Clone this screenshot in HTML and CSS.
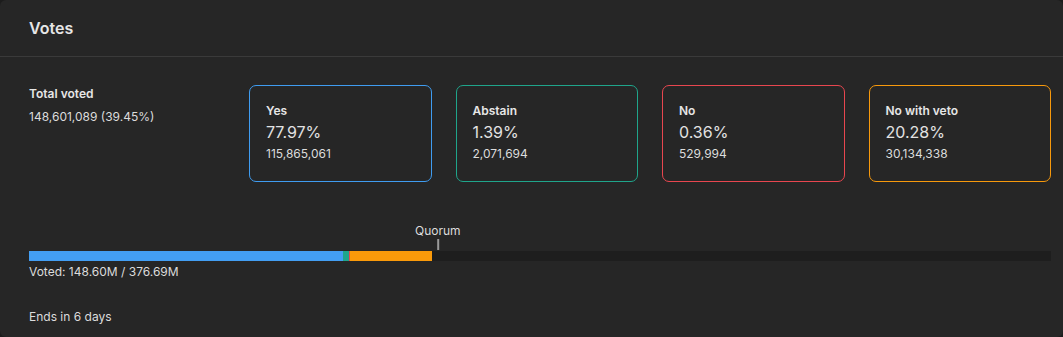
FILE: index.html
```html
<!DOCTYPE html>
<html lang="en">
<head>
  <meta charset="UTF-8" />
  <meta name="viewport" content="width=device-width, initial-scale=1.0" />
  <title>Votes</title>
  <link rel="stylesheet" href="styles.css">
</head>
<body>

  <div class="panel">
    <div class="panel-header">
      <h2>Votes</h2>
    </div>

    <div class="panel-body">
      <div class="summary">
        <div class="total">
          <div class="label">Total voted</div>
          <div class="value">148,601,089 (39.45%)</div>
        </div>

        <div class="options">
          <div class="option yes">
            <div class="label">Yes</div>
            <div class="percent">77.97%</div>
            <div class="value">115,865,061</div>
          </div>
          <div class="option abstain">
            <div class="label">Abstain</div>
            <div class="percent">1.39%</div>
            <div class="value">2,071,694</div>
          </div>
          <div class="option no">
            <div class="label">No</div>
            <div class="percent">0.36%</div>
            <div class="value">529,994</div>
          </div>
          <div class="option veto">
            <div class="label">No with veto</div>
            <div class="percent">20.28%</div>
            <div class="value">30,134,338</div>
          </div>
        </div>
      </div>

      <div class="progress">
        <div class="quorum" style="left: 40%">
          <span>Quorum</span>
          <div class="tick"></div>
        </div>
        <div class="bar">
          <div class="seg yes" style="width: 30.76%"></div>
          <div class="seg abstain" style="width: 0.55%"></div>
          <div class="seg no" style="width: 0.14%"></div>
          <div class="seg veto" style="width: 8%"></div>
        </div>
        <div class="voted">Voted: 148.60M / 376.69M</div>
      </div>

      <div class="ends">Ends in 6 days</div>
    </div>
  </div>

</body>
</html>
```

FILE: styles.css
```css
body {
  margin: 0;
  background-color: #1c1c1c;
  font-family: Inter, "Liberation Sans", sans-serif;
  color: #e2e2e2;
}

.panel {
  background-color: #262626;
  border-radius: 6px;
  min-height: 337px;
}

.panel-header {
  height: 57px;
  padding: 0 12px 0 29px;
  display: flex;
  align-items: center;
  border-bottom: 1px solid #3a3a3a;
  box-sizing: border-box;
}

.panel-header h2 {
  margin: 0;
  font-size: 16px;
  font-weight: 600;
  color: #e6e6e6;
  padding-bottom: 1px;
}

.panel-body {
  padding: 28px 12px 0 29px;
}

.summary {
  display: flex;
  gap: 24px;
}

.total {
  width: 196px;
  flex-shrink: 0;
  padding-top: 1px;
}

.label {
  font-size: 12px;
  font-weight: 600;
  line-height: 16px;
  color: #e6e6e6;
}

.value {
  font-size: 12px;
  line-height: 16px;
  color: #dcdcdc;
}

.total .value {
  margin-top: 7px;
}

.options {
  flex: 1;
  display: flex;
  gap: 24px;
}

.option {
  flex: 1;
  height: 97px;
  box-sizing: border-box;
  padding: 17px 16px 0 16px;
  border: 1px solid;
  border-radius: 7px;
}

.option .percent {
  font-size: 16px;
  line-height: 20px;
  margin-top: 3px;
  color: #e2e2e2;
}

.option .value {
  margin-top: 4px;
}

.option.yes { border-color: #3f9cf0; }
.option.abstain { border-color: #1fa58b; }
.option.no { border-color: #e8464f; }
.option.veto { border-color: #f7990c; }

.progress {
  position: relative;
  margin-top: 41px;
  padding-top: 28px;
}

.quorum {
  position: absolute;
  top: 0;
  transform: translateX(-50%);
  display: flex;
  flex-direction: column;
  align-items: center;
}

.quorum span {
  font-size: 12px;
  line-height: 16px;
  color: #dcdcdc;
}

.quorum .tick {
  width: 2px;
  height: 11px;
  margin-top: 0;
  background-color: #9a9a9a;
}

.bar {
  display: flex;
  height: 10px;
  background-color: #1e1e1e;
}

.seg.yes { background-color: #439ef3; }
.seg.abstain { background-color: #1fa58b; }
.seg.no { background-color: #e8464f; }
.seg.veto { background-color: #fa9a0a; }

.voted {
  font-size: 12px;
  line-height: 16px;
  margin-top: 3px;
  color: #dcdcdc;
}

.ends {
  font-size: 12px;
  line-height: 16px;
  margin-top: 29px;
  color: #dcdcdc;
}
```
